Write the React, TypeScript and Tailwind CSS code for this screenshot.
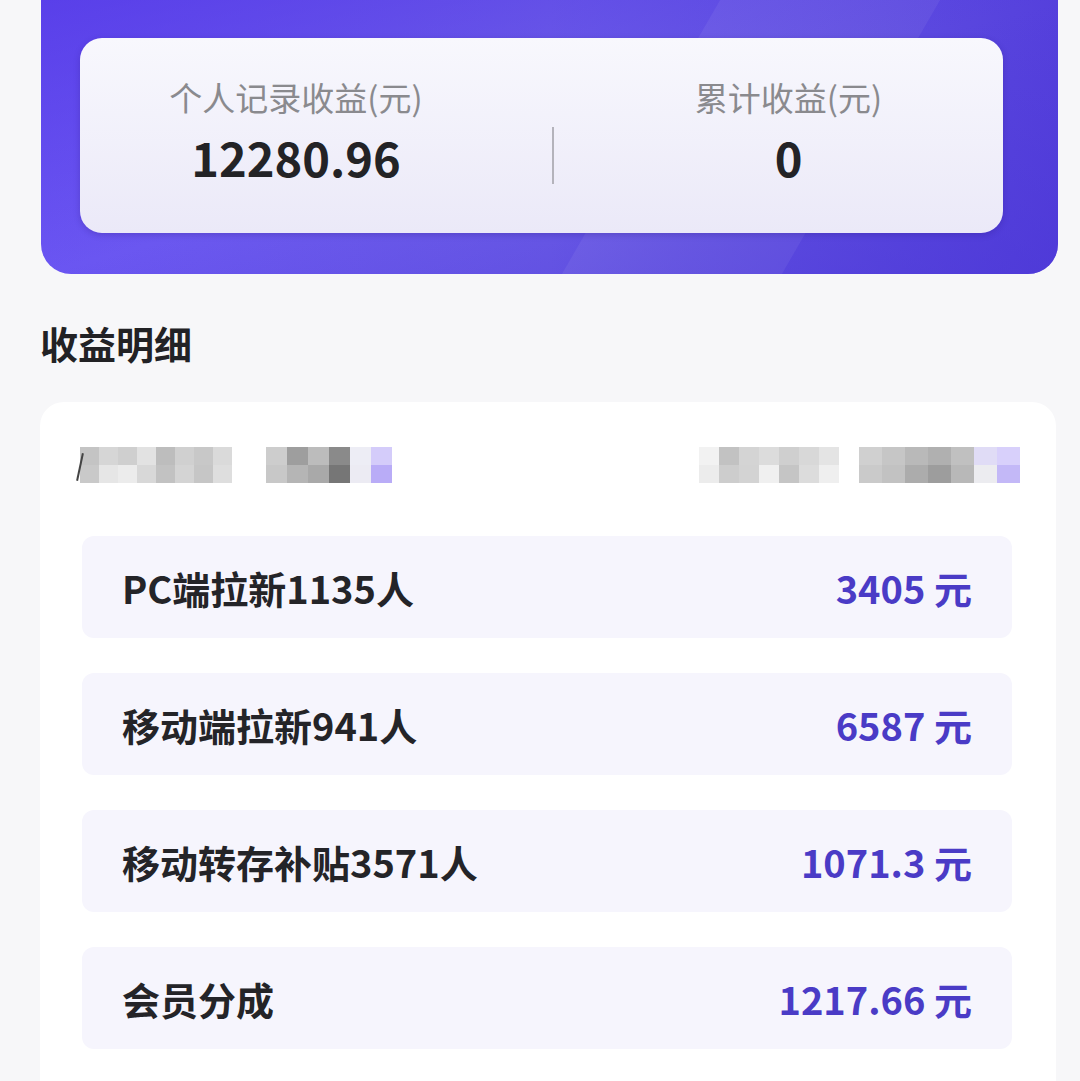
import React from "react";

interface IncomeRow {
  title: string;
  amount: string;
}

const rows: IncomeRow[] = [
  { title: "PC端拉新1135人", amount: "3405" },
  { title: "移动端拉新941人", amount: "6587" },
  { title: "移动转存补贴3571人", amount: "1071.3" },
  { title: "会员分成", amount: "1217.66" },
];

// mosaic cells standing in for the blurred (redacted) text
const mosaicA = [
  ["#c4c4c4", "#d6d6d6", "#cfcfcf", "#e2e2e2", "#bdbdbd", "#d0d0d0", "#c8c8c8", "#dadada"],
  ["#c9c9c9", "#e6e6e6", "#ececec", "#d8d8d8", "#c2c2c2", "#d4d4d4", "#c6c6c6", "#dedede"],
];
const mosaicB = [
  ["#cdcdcd", "#9e9e9e", "#bcbcbc", "#8a8a8a", "#ededf5", "#d4ccfa"],
  ["#c8c8c8", "#b5b5b5", "#a9a9a9", "#767676", "#ecebf3", "#b9acf7"],
];
const mosaicC = [
  ["#f2f2f2", "#c2c2c2", "#d4d4d4", "#dcdcdc", "#cfcfcf", "#d8d8d8", "#e4e4e4"],
  ["#ececec", "#cdcdcd", "#d3d3d3", "#f0f0f0", "#c5c5c5", "#dcdcdc", "#efefef"],
];
const mosaicD = [
  ["#d0d0d0", "#c6c6c6", "#b9b9b9", "#b0b0b0", "#c0c0c0", "#e0dcf6", "#d8d0fb"],
  ["#cacaca", "#c2c2c2", "#acacac", "#9d9d9d", "#b8b8b8", "#ececf0", "#c3b8f7"],
];

function Mosaic({ cells, cellW }: { cells: string[][]; cellW: number }) {
  return (
    <div className="flex flex-col">
      {cells.map((line, i) => (
        <div key={i} className="flex">
          {line.map((c, j) => (
            <div key={j} className="h-[18px]" style={{ width: cellW, backgroundColor: c }} />
          ))}
        </div>
      ))}
    </div>
  );
}

export default function App() {
  return (
    <div
      className="min-h-[1081px] w-[1080px] overflow-hidden bg-[#f7f7f9] pl-[41px] pr-[22px]"
      style={{ fontFamily: '"Noto Sans CJK SC", "Noto Sans", sans-serif' }}
    >
      {/* Summary card */}
      <div className="relative overflow-hidden rounded-b-[30px] bg-gradient-to-r from-[#6a55f2] via-[#6d5ee8] to-[#5540dc] pt-[38px] pb-[41px]">
        <div className="absolute inset-0 bg-gradient-to-br from-[#5236e6]/70 via-transparent to-[#4a36d6]/60" />
        <div className="absolute top-0 left-[600px] h-full w-[220px] -skew-x-[30deg] bg-white/[0.06]" />
        <div className="relative ml-[39px] mr-[55px] flex h-[195px] items-start rounded-[22px] bg-gradient-to-b from-[#f8f8fd] to-[#ebe9f8] shadow-[0_2px_6px_rgba(40,20,120,0.25)]">
          <div className="flex w-[432px] flex-col items-center pt-[36px]">
            <span className="text-[33px] leading-[46px] text-[#8a8a8e]">个人记录收益(元)</span>
            <span className="mt-[7px] text-[47px] leading-[60px] font-bold text-[#232326]">12280.96</span>
          </div>
          <div className="mt-[89px] ml-[40px] h-[57px] w-[2px] bg-[#b4b3bb]" />
          <div className="flex flex-1 flex-col items-center pt-[36px] pl-[20px]">
            <span className="text-[33px] leading-[46px] text-[#8a8a8e]">累计收益(元)</span>
            <span className="mt-[7px] text-[47px] leading-[60px] font-bold text-[#232326]">0</span>
          </div>
        </div>
      </div>

      {/* Section heading */}
      <h2 className="mt-[45px] -ml-px text-[38px] leading-[48px] font-bold text-[#222225]">收益明细</h2>

      {/* Detail card */}
      <div className="mt-[35px] mr-[2px] -ml-px rounded-t-[24px] bg-white pt-[45px] pr-[44px] pb-[40px] pl-[42px]">
        <div className="flex items-start justify-between">
          <div className="flex items-start">
            <div className="relative -ml-[2px]">
              <div className="absolute top-[6px] -left-[1px] h-[28px] w-[2px] rotate-12 bg-[#444]" />
              <Mosaic cells={mosaicA} cellW={19} />
            </div>
            <div className="ml-[34px]">
              <Mosaic cells={mosaicB} cellW={21} />
            </div>
          </div>
          <div className="mr-[-8px] flex items-start">
            <Mosaic cells={mosaicC} cellW={20} />
            <div className="ml-[20px]">
              <Mosaic cells={mosaicD} cellW={23} />
            </div>
          </div>
        </div>

        <div className="mt-[53px] flex flex-col gap-[35px]">
          {rows.map((r) => (
            <div
              key={r.title}
              className="flex h-[102px] items-center justify-between rounded-[12px] bg-[#f6f5fd] px-[40px]"
            >
              <span className="text-[38px] font-bold text-[#242428]">{r.title}</span>
              <span className="text-[38px] font-bold text-[#4a3bc6]">
                {r.amount} 元
              </span>
            </div>
          ))}
        </div>
      </div>
    </div>
  );
}
